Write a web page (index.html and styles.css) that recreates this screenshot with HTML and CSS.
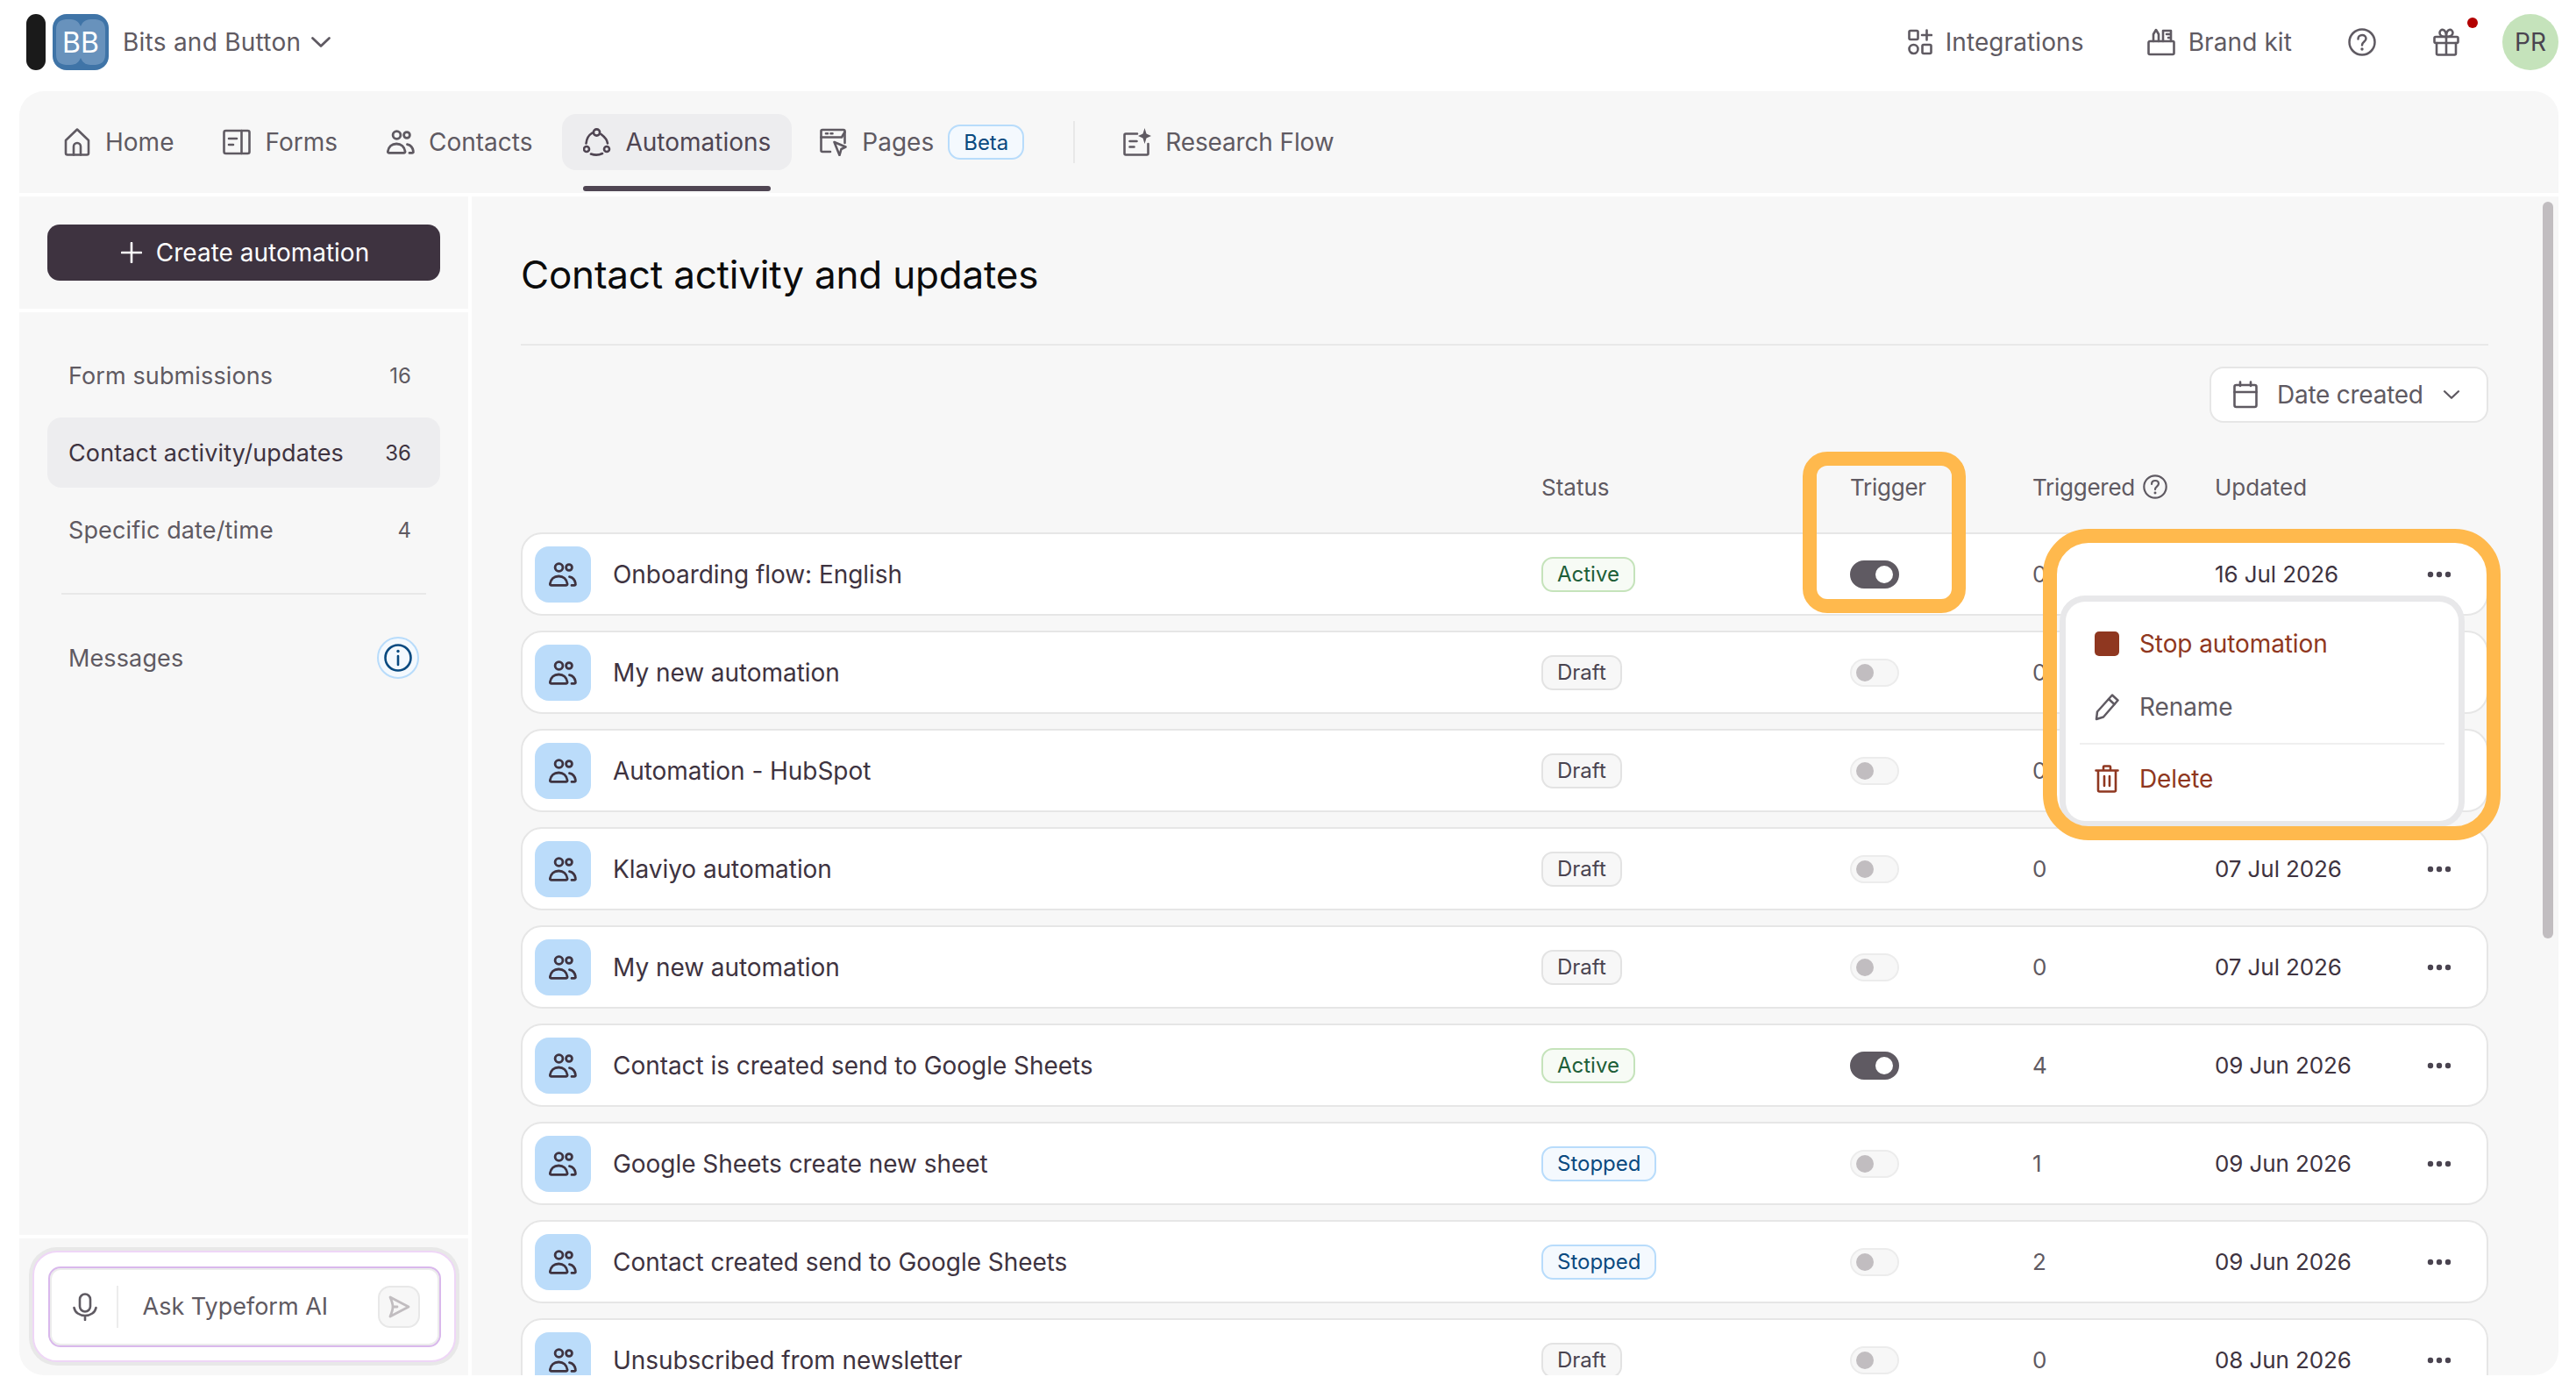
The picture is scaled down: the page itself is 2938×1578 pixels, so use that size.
FILE: index.html
```html
<!DOCTYPE html>
<html lang="en">
<head>
<meta charset="utf-8">
<title>Automations</title>
<link rel="stylesheet" href="styles.css">
</head>
<body>
<svg class="defs" width="0" height="0" aria-hidden="true">
  <symbol id="people" viewBox="0 0 32 28"><g fill="none" stroke="currentColor" stroke-width="2.800" stroke-linecap="round" stroke-linejoin="round"><circle cx="11.500" cy="6" r="4.400"/><circle cx="23" cy="6" r="3.400"/><path d="M3 26.400h16.400c1.200 0 1.800-.7 1.600-1.900C20.200 19.400 16.600 16 11.200 16 5.800 16 2.200 19.400 1.400 24.500 1.200 25.700 1.800 26.400 3 26.400z"/><path d="M23.500 16.600c3.700.7 6.300 3.700 6.900 7.900.2 1.200-.4 1.900-1.500 1.900H26"/></g></symbol>
  <symbol id="chev" viewBox="0 0 24 14"><path d="M2.500 2.500 12 11.500l9.500-9" fill="none" stroke="currentColor" stroke-width="2.800" stroke-linecap="round" stroke-linejoin="round"/></symbol>
  <symbol id="help" viewBox="0 0 32 32"><g fill="none" stroke="currentColor" stroke-width="2.500" stroke-linecap="round"><circle cx="16" cy="16" r="14.500"/><path d="M11.500 12.500c0-2.800 2-4.500 4.600-4.500 2.600 0 4.400 1.700 4.400 4 0 3.500-4.500 3.500-4.500 7.500"/></g><circle cx="16" cy="24" r="1.700" fill="currentColor"/></symbol>
</svg>

<header class="topbar">
  <div class="brand">
    <span class="pill"></span>
    <span class="logo">
      <svg class="logo-art" viewBox="0 0 64 64"><rect width="64" height="64" rx="16" fill="#3f74a7"/><path d="M4 18C4 8 10 6 18 6c7 0 11 1 14 8 3-7 7-8 14-8 8 0 14 2 14 12v28c0 10-6 12-14 12-7 0-11-1-14-8-3 7-7 8-14 8-8 0-14-2-14-12z" fill="#6892bc"/></svg>
      <span class="logo-text">BB</span>
    </span>
    <span class="brand-name">Bits and Button</span>
    <svg class="brand-chev"><use href="#chev"/></svg>
  </div>
  <div class="top-actions">
    <a class="top-link">
      <svg class="ico-top" viewBox="0 0 28 32"><g fill="none" stroke="currentColor" stroke-width="2.600" stroke-linecap="round" stroke-linejoin="round"><rect x="1.500" y="3" width="10" height="10" rx="1.500"/><path d="M21.500 2.500v11M16 8h11"/><circle cx="6.500" cy="24" r="5"/><rect x="16.500" y="19" width="10" height="10" rx="1.500"/></g></svg>
      <span>Integrations</span>
    </a>
    <a class="top-link link-brand">
      <svg class="ico-top ico-kit" viewBox="0 0 32 32"><g fill="none" stroke="currentColor" stroke-width="2.600" stroke-linecap="round" stroke-linejoin="round"><path d="M3 15h26a1.500 1.500 0 0 1 1.500 1.500v12A1.500 1.500 0 0 1 29 30H3a1.500 1.500 0 0 1-1.500-1.500v-12A1.500 1.500 0 0 1 3 15z"/><path d="M7 15V7l3-5 3 5v8"/><path d="M18 15V3h9v12M22 7h5M24 11h3"/></g></svg>
      <span>Brand kit</span>
    </a>
    <svg class="ico-help"><use href="#help"/></svg>
    <span class="gift">
      <svg class="ico-gift" viewBox="0 0 30 32"><g fill="none" stroke="currentColor" stroke-width="2.600" stroke-linecap="round" stroke-linejoin="round"><rect x="1.500" y="10" width="27" height="7" rx="1.500"/><path d="M4 17v12a1.500 1.500 0 0 0 1.500 1.500h19A1.500 1.500 0 0 0 26 29V17M15 10v20.500"/><path d="M15 10C11 10 7.500 8.500 7.500 5.500 7.500 3 9.500 1.500 11.500 2 14 2.700 15 6 15 10zM15 10c4 0 7.500-1.500 7.500-4.500C22.500 3 20.500 1.500 18.500 2 16 2.700 15 6 15 10z"/></g></svg>
      <span class="gift-dot"></span>
    </span>
    <span class="avatar">PR</span>
  </div>
</header>

<main class="panel">
  <nav class="tabs">
    <a class="tab">
      <svg class="ico-tab" viewBox="0 0 32 32"><g fill="none" stroke="currentColor" stroke-width="2.600" stroke-linecap="round" stroke-linejoin="round"><path d="M3 14 16 1.500 29 14v14.500a2 2 0 0 1-2 2H5a2 2 0 0 1-2-2z"/><path d="M12 30.500V21a4 4 0 0 1 8 0v9.500"/></g></svg>
      <span>Home</span>
    </a>
    <a class="tab">
      <svg class="ico-tab" viewBox="0 0 32 32"><g fill="none" stroke="currentColor" stroke-width="2.600" stroke-linecap="round" stroke-linejoin="round"><rect x="1.500" y="3" width="29" height="26" rx="2"/><path d="M21.500 3v26M7 12h9M7 19h5"/></g></svg>
      <span>Forms</span>
    </a>
    <a class="tab">
      <svg class="ico-tab"><use href="#people"/></svg>
      <span>Contacts</span>
    </a>
    <a class="tab tab-active">
      <svg class="ico-tab" viewBox="0 0 32 32"><g fill="none" stroke="currentColor" stroke-width="2.600" stroke-linecap="round"><circle cx="15.500" cy="5" r="3.600"/><circle cx="4" cy="24" r="3"/><circle cx="27" cy="24" r="3"/><path d="M10.500 5.500C6.500 8 4 12 3.500 17.500"/><path d="M20.500 7c4 3 7 6 7.500 10.500"/><path d="M9 29.500c4 1.500 9 1.500 13-.5"/></g></svg>
      <span>Automations</span>
    </a>
    <a class="tab">
      <svg class="ico-tab" viewBox="0 0 32 32"><g fill="none" stroke="currentColor" stroke-width="2.600" stroke-linecap="round" stroke-linejoin="round"><path d="M12 27H3a1.500 1.500 0 0 1-1.500-1.500v-22A1.500 1.500 0 0 1 3 2h24a1.500 1.500 0 0 1 1.500 1.500V17"/><path d="M1.500 10.500H25l3.500-6"/><path d="M7 6.200h2M12.500 6.200h2"/><path d="m16.500 16 13 5.500-5 2.500-2 7z"/></g></svg>
      <span>Pages</span>
      <span class="beta">Beta</span>
    </a>
    <span class="tab-sep"></span>
    <a class="tab tab-research">
      <svg class="ico-tab" viewBox="0 0 32 32"><g fill="none" stroke="currentColor" stroke-width="2.600" stroke-linecap="round" stroke-linejoin="round"><path d="M16 6.500H3A1.500 1.500 0 0 0 1.500 8v21A1.500 1.500 0 0 0 3 30.500h24a1.500 1.500 0 0 0 1.500-1.500V18"/><path d="M7.500 15h8M7.500 21.500h5"/></g><path d="M24.500 0l2 6.500 5.500 2.500-5.500 2.500-2 6.500-2-6.500L17 9l5.500-2.500z" fill="currentColor"/></svg>
      <span>Research Flow</span>
    </a>
  </nav>

  <div class="workspace">
    <aside class="sidebar">
      <div class="side-top">
        <button class="create">
          <svg class="ico-plus" viewBox="0 0 24 24"><path d="M12 1v22M1 12h22" fill="none" stroke="currentColor" stroke-width="2.600" stroke-linecap="round"/></svg>
          <span>Create automation</span>
        </button>
      </div>
      <div class="side-nav">
        <a class="side-item"><span>Form submissions</span><span class="count">16</span></a>
        <a class="side-item side-active"><span>Contact activity/updates</span><span class="count">36</span></a>
        <a class="side-item"><span>Specific date/time</span><span class="count">4</span></a>
        <div class="side-sep"></div>
        <a class="side-item"><span>Messages</span>
          <span class="info">
            <svg class="ico-info" viewBox="0 0 32 32"><g fill="none" stroke="currentColor" stroke-width="2.600" stroke-linecap="round"><circle cx="16" cy="16" r="14.500"/><path d="M16 14v10"/></g><circle cx="16" cy="8.500" r="1.700" fill="currentColor"/></svg>
          </span>
        </a>
      </div>
      <div class="side-ai">
        <div class="ai-shell">
          <div class="ai-input">
            <svg class="ico-mic" viewBox="0 0 28 32"><g fill="none" stroke="currentColor" stroke-width="2.600" stroke-linecap="round" stroke-linejoin="round"><rect x="8" y="1.500" width="12" height="20" rx="6"/><path d="M1.500 17c1 5.500 6 9 12.500 9s11.500-3.500 12.500-9M14 26v5"/></g></svg>
            <span class="ai-sep"></span>
            <span class="ai-text">Ask Typeform AI</span>
            <span class="ai-send">
              <svg class="ico-send" viewBox="0 0 28 28"><path d="M4 3 25 14 4 25c1.500-3.500 3-7 3-11S5.500 6.500 4 3zM7 14h5" fill="none" stroke="currentColor" stroke-width="2.800" stroke-linecap="round" stroke-linejoin="round"/></svg>
            </span>
          </div>
        </div>
      </div>
    </aside>

    <section class="content">
      <h1 class="title">Contact activity and updates</h1>
      <div class="toolbar">
        <button class="date-btn">
          <svg class="ico-cal" viewBox="0 0 28 32"><g fill="none" stroke="currentColor" stroke-width="2.600" stroke-linecap="round" stroke-linejoin="round"><rect x="1.500" y="5" width="25" height="25" rx="2"/><path d="M1.500 13h25M8 1.500V6M20 1.500V6"/></g></svg>
          <span>Date created</span>
          <svg class="ico-chev"><use href="#chev"/></svg>
        </button>
      </div>

      <div class="cols head">
        <span></span>
        <span>Status</span>
        <span class="head-tight">Trigger</span>
        <span class="head-trig"><span class="head-tight">Triggered</span> <svg class="ico-q"><use href="#help"/></svg></span>
        <span>Updated</span>
      </div>

      <div class="list">
        <div class="cols row"><span class="row-ico"><svg><use href="#people"/></svg></span><span class="row-name">Onboarding flow: English</span><span><span class="tag tag-active">Active</span></span><span class="toggle on"><i></i></span><span class="num">0</span><span class="date">16 Jul 2026</span><svg class="dots" viewBox="0 0 28 8"><circle cx="4" cy="4" r="3.200"/><circle cx="14" cy="4" r="3.200"/><circle cx="24" cy="4" r="3.200"/></svg></div>
        <div class="cols row"><span class="row-ico"><svg><use href="#people"/></svg></span><span class="row-name">My new automation</span><span><span class="tag tag-draft">Draft</span></span><span class="toggle"><i></i></span><span class="num">0</span><span class="date">14 Jul 2026</span><svg class="dots" viewBox="0 0 28 8"><circle cx="4" cy="4" r="3.200"/><circle cx="14" cy="4" r="3.200"/><circle cx="24" cy="4" r="3.200"/></svg></div>
        <div class="cols row"><span class="row-ico"><svg><use href="#people"/></svg></span><span class="row-name">Automation - HubSpot</span><span><span class="tag tag-draft">Draft</span></span><span class="toggle"><i></i></span><span class="num">0</span><span class="date">10 Jul 2026</span><svg class="dots" viewBox="0 0 28 8"><circle cx="4" cy="4" r="3.200"/><circle cx="14" cy="4" r="3.200"/><circle cx="24" cy="4" r="3.200"/></svg></div>
        <div class="cols row"><span class="row-ico"><svg><use href="#people"/></svg></span><span class="row-name">Klaviyo automation</span><span><span class="tag tag-draft">Draft</span></span><span class="toggle"><i></i></span><span class="num">0</span><span class="date">07 Jul 2026</span><svg class="dots" viewBox="0 0 28 8"><circle cx="4" cy="4" r="3.200"/><circle cx="14" cy="4" r="3.200"/><circle cx="24" cy="4" r="3.200"/></svg></div>
        <div class="cols row"><span class="row-ico"><svg><use href="#people"/></svg></span><span class="row-name">My new automation</span><span><span class="tag tag-draft">Draft</span></span><span class="toggle"><i></i></span><span class="num">0</span><span class="date">07 Jul 2026</span><svg class="dots" viewBox="0 0 28 8"><circle cx="4" cy="4" r="3.200"/><circle cx="14" cy="4" r="3.200"/><circle cx="24" cy="4" r="3.200"/></svg></div>
        <div class="cols row"><span class="row-ico"><svg><use href="#people"/></svg></span><span class="row-name">Contact is created send to Google Sheets</span><span><span class="tag tag-active">Active</span></span><span class="toggle on"><i></i></span><span class="num">4</span><span class="date">09 Jun 2026</span><svg class="dots" viewBox="0 0 28 8"><circle cx="4" cy="4" r="3.200"/><circle cx="14" cy="4" r="3.200"/><circle cx="24" cy="4" r="3.200"/></svg></div>
        <div class="cols row"><span class="row-ico"><svg><use href="#people"/></svg></span><span class="row-name">Google Sheets create new sheet</span><span><span class="tag tag-stopped">Stopped</span></span><span class="toggle"><i></i></span><span class="num">1</span><span class="date">09 Jun 2026</span><svg class="dots" viewBox="0 0 28 8"><circle cx="4" cy="4" r="3.200"/><circle cx="14" cy="4" r="3.200"/><circle cx="24" cy="4" r="3.200"/></svg></div>
        <div class="cols row"><span class="row-ico"><svg><use href="#people"/></svg></span><span class="row-name">Contact created send to Google Sheets</span><span><span class="tag tag-stopped">Stopped</span></span><span class="toggle"><i></i></span><span class="num">2</span><span class="date">09 Jun 2026</span><svg class="dots" viewBox="0 0 28 8"><circle cx="4" cy="4" r="3.200"/><circle cx="14" cy="4" r="3.200"/><circle cx="24" cy="4" r="3.200"/></svg></div>
        <div class="cols row"><span class="row-ico"><svg><use href="#people"/></svg></span><span class="row-name">Unsubscribed from newsletter</span><span><span class="tag tag-draft">Draft</span></span><span class="toggle"><i></i></span><span class="num">0</span><span class="date">08 Jun 2026</span><svg class="dots" viewBox="0 0 28 8"><circle cx="4" cy="4" r="3.200"/><circle cx="14" cy="4" r="3.200"/><circle cx="24" cy="4" r="3.200"/></svg></div>
      </div>

      <div class="menu">
        <div class="menu-item danger"><span class="stop-square"></span><span>Stop automation</span></div>
        <div class="menu-item">
          <svg class="ico-menu" viewBox="0 0 28 30"><g fill="none" stroke="currentColor" stroke-width="2.500" stroke-linecap="round" stroke-linejoin="round"><path d="M20 1.500 26.500 7.500 10 26.500l-8 2.500 1-8.500z"/><path d="M16 6l6.500 6"/></g></svg>
          <span>Rename</span>
        </div>
        <div class="menu-sep"></div>
        <div class="menu-item danger">
          <svg class="ico-menu" viewBox="0 0 28 32"><g fill="none" stroke="currentColor" stroke-width="2.600" stroke-linecap="round" stroke-linejoin="round"><path d="M1.500 6.500h25M4 6.500V29a1.500 1.500 0 0 0 1.500 1.500h17A1.500 1.500 0 0 0 24 29V6.500M10 6.500V2.500a1 1 0 0 1 1-1h6a1 1 0 0 1 1 1v4M11 13v11M17 13v11"/></g></svg>
          <span>Delete</span>
        </div>
      </div>
      <div class="mark mark-trigger"></div>
      <div class="mark mark-menu"></div>
      <div class="scroll-thumb"></div>
    </section>
  </div>
</main>
</body>
</html>
```

FILE: styles.css
```css
* { box-sizing: border-box; }
html, body { height: 100%; }
body {
  margin: 0;
  background: #fff;
  color: #5f5a62;
  font-family: Inter, "Noto Sans", sans-serif;
  font-size: 28px;
  overflow: hidden;
}
a { color: inherit; text-decoration: none; }
button { font: inherit; cursor: pointer; }
.defs { display: block; height: 0; }

/* top bar */
.topbar {
  height: 104px;
  padding: 16px 20px 24px 30px;
  display: flex;
  justify-content: space-between;
  align-items: center;
}
.brand, .top-actions { display: flex; align-items: center; }
.pill { width: 22px; height: 64px; border-radius: 11px; background: #1a1a1a; margin-right: 8px; }
.logo { display: grid; width: 64px; height: 64px; place-items: center; margin-right: 16px; }
.logo-art, .logo-text { grid-area: 1 / 1; }
.logo-art { width: 64px; height: 64px; display: block; }
.logo-text { color: #fff; font-size: 32px; }
.brand-name { margin-right: 11px; letter-spacing: .25px; }
.brand-chev { width: 24px; height: 14px; }
.top-link { display: flex; align-items: center; gap: 15px; }
.top-link span { letter-spacing: .1px; }
.ico-top { width: 28px; height: 32px; }
.ico-kit { width: 32px; }
.link-brand { margin-left: 72px; }
.ico-help { width: 32px; height: 32px; margin-left: 64px; }
.gift { position: relative; display: flex; margin-left: 65px; }
.ico-gift { width: 30px; height: 32px; }
.gift-dot { position: absolute; left: 39px; top: -12px; width: 12px; height: 12px; border-radius: 50%; background: #b30000; }
.avatar {
  width: 64px; height: 64px; margin-left: 49px;
  border-radius: 50%;
  background: #c5e3bb;
  color: #4a4450;
  display: grid; place-items: center;
  font-size: 28px;
}

/* panel */
.panel {
  height: 1464px;
  margin: 0 20px 0 22px;
  border-radius: 28px;
  overflow: hidden;
  display: flex;
  flex-direction: column;
  gap: 4px;
}
.tabs {
  height: 116px;
  flex: none;
  background: #f7f7f7;
  padding: 26px 0 0 26px;
  display: flex;
  align-items: flex-start;
  gap: 8px;
}
.tab {
  position: relative;
  height: 64px;
  padding: 0 24px;
  display: flex;
  align-items: center;
  gap: 16px;
  border-radius: 16px;
}
.ico-tab { width: 32px; height: 32px; flex: none; }
.tab-active { background: #ededef; color: #4f4552; margin-left: 2px; }
.tab-active::after {
  content: "";
  position: absolute;
  left: 24px; right: 24px; bottom: -24px;
  height: 6px;
  border-radius: 3px;
  background: #4f4552;
}
.beta {
  height: 40px;
  padding: 0 16px;
  display: flex;
  align-items: center;
  border: 2px solid #b8dcfb;
  border-radius: 14px;
  background: #f4f9fe;
  color: #0a4a80;
  font-size: 24px;
}
.tab-sep { width: 2px; height: 48px; margin: 8px 23px 0 24px; background: #e8e8e8; }
.tab-research span { letter-spacing: -.15px; }

/* layout */
.workspace { flex: 1; min-height: 0; display: flex; gap: 4px; }
.sidebar { width: 512px; flex: none; display: flex; flex-direction: column; gap: 4px; }
.side-top { height: 128px; flex: none; padding: 32px; background: #f7f7f7; }
.create {
  width: 100%; height: 64px;
  border: 0; border-radius: 14px;
  background: #3e3340;
  color: #fff;
  display: flex; align-items: center; justify-content: center;
  gap: 16px;
  padding: 0 0 0 3px;
}
.ico-plus { width: 24px; height: 24px; }
.side-nav { flex: 1; min-height: 0; padding: 32px; background: #f7f7f7; display: flex; flex-direction: column; gap: 8px; font-size: 27px; letter-spacing: .12px; }
.side-item {
  height: 80px;
  padding: 0 33px 0 24px;
  border-radius: 16px;
  display: flex; align-items: center; justify-content: space-between;
}
.side-active { background: #ededef; color: #3e3340; }
.count { font-size: 24px; letter-spacing: 0; }
.side-sep { height: 2px; margin: 24px 16px; background: #e8e8e8; }
.info {
  width: 48px; height: 48px; margin-right: -9px;
  border: 2px solid #b8dcfb; border-radius: 50%;
  background: #f4f9fe; color: #0a4a80;
  display: grid; place-items: center;
}
.ico-info { width: 32px; height: 32px; }

/* AI box */
.side-ai { height: 156px; flex: none; background: #f7f7f7; padding: 14px 14px 15px 15px; }
.ai-shell {
  height: 127px;
  border: 2px solid #efd6f7;
  border-radius: 28px;
  background: #fff;
  box-shadow: 0 0 0 4px #e8e8e8;
  display: flex; align-items: center; justify-content: center;
}
.ai-input {
  width: 448px; height: 92px;
  border: 2px solid #d9b8ec;
  border-radius: 14px;
  box-shadow: inset 0 0 0 2px #ececec;
  padding: 0 22px 0 26px;
  display: flex; align-items: center;
  font-size: 27px;
}
.ico-mic { width: 28px; height: 32px; flex: none; }
.ai-sep { width: 2px; height: 48px; margin: 0 28px 0 22px; background: #ececec; }
.ai-text { flex: 1; }
.ai-send {
  width: 48px; height: 48px;
  border: 2px solid #e8e8e8; border-radius: 14px;
  background: #f7f7f7; color: #c1bdc0;
  display: grid; place-items: center;
}
.ico-send { width: 28px; height: 28px; }

/* content */
.content {
  position: relative;
  flex: 1;
  min-width: 0;
  background: #f7f7f7;
  padding: 56px 80px 0 56px;
  overflow: hidden;
}
.title {
  margin: 0;
  padding-bottom: 46px;
  border-bottom: 2px solid #e8e8e8;
  color: #0b0b0b;
  font-size: 44px;
  font-weight: 400;
  line-height: 66px;
  letter-spacing: -.2px;
}
.toolbar { display: flex; justify-content: flex-end; margin-top: 24px; }
.date-btn {
  height: 64px; width: 318px;
  border: 2px solid #e6e6e6; border-radius: 16px;
  background: #fff; color: #5f5a62;
  display: flex; align-items: center;
  padding: 0 0 0 25px;
  gap: 22px;
}
.date-btn span { letter-spacing: -.25px; }
.ico-cal { width: 28px; height: 32px; }
.ico-chev { width: 20px; height: 12px; }
.cols {
  display: grid;
  grid-template-columns: 64px 1084px 352px 208px 208px 1fr auto;
  align-items: center;
  padding: 0 40px 0 14px;
  border: 2px solid transparent;
}
.head { grid-template-columns: 1148px 352px 208px 208px 1fr; height: 44px; margin-top: 51px; font-size: 26px; }
.head-tight { letter-spacing: -.25px; }
.head-trig { display: flex; align-items: center; gap: 9px; }
.ico-q { width: 28px; height: 28px; }
.list { margin-top: 30px; display: flex; flex-direction: column; gap: 17px; }
.row {
  height: 95px;
  flex: none;
  background: #fff;
  border-color: #e6e6e6;
  border-radius: 24px;
  font-size: 26px;
}
.row-ico {
  width: 64px; height: 64px;
  border-radius: 16px;
  background: #bbdcfa;
  color: #3e3340;
  display: grid; place-items: center;
}
.row-ico svg { width: 32px; height: 28px; display: block; }
.row-name { padding-left: 25px; color: #3e3340; font-size: 28px; letter-spacing: -.05px; }
.tag {
  display: inline-flex; align-items: center;
  height: 40px; padding: 0 16px;
  border: 2px solid; border-radius: 13px;
  font-size: 24px;
  vertical-align: middle;
}
.tag-active { border-color: #c5e3bb; background: #f7fbf5; color: #1d5e38; }
.tag-draft { border-color: #e3e3e3; background: #f7f7f7; color: #4a4450; }
.tag-stopped { border-color: #b8dcfb; background: #f4f9fe; color: #0a4a80; }
.toggle {
  width: 56px; height: 32px;
  border: 2px solid #ececec; border-radius: 16px;
  background: #f7f7f7;
  display: flex; align-items: center;
  padding-left: 5px;
}
.toggle i { width: 20px; height: 20px; border-radius: 50%; background: #c1bdc0; }
.toggle.on { background: #5f5a62; border-color: #5f5a62; padding-left: 27px; }
.toggle.on i { background: #fff; }
.date { color: #3e3340; letter-spacing: -.1px; }
.dots { width: 28px; height: 8px; fill: #4a4450; }

/* overlays */
.menu {
  position: absolute;
  left: 1818px; top: 462px;
  width: 448px; height: 250px;
  background: #fff;
  border-radius: 22px;
  box-shadow: 0 0 0 7px #e8e8ea;
  padding: 12px 16px 0;
  letter-spacing: -.1px;
}
.menu-item { height: 72px; display: flex; align-items: center; gap: 23px; padding-left: 17px; }
.menu-item.danger { color: #8f3720; }
.stop-square { width: 28px; height: 28px; border-radius: 5px; background: #8f3720; }
.ico-menu { width: 28px; height: 32px; }
.menu-sep { height: 2px; margin: 5px 0 3px; background: #efefef; }
.mark { position: absolute; border: 16px solid #ffb94d; pointer-events: none; }
.mark-trigger { left: 1518px; top: 291px; width: 186px; height: 184px; border-radius: 28px; }
.mark-menu { left: 1792px; top: 379px; width: 522px; height: 355px; border-radius: 52px; }
.scroll-thumb { position: absolute; right: 6px; top: 6px; width: 12px; height: 840px; border-radius: 6px; background: #c1bdc0; }
```
